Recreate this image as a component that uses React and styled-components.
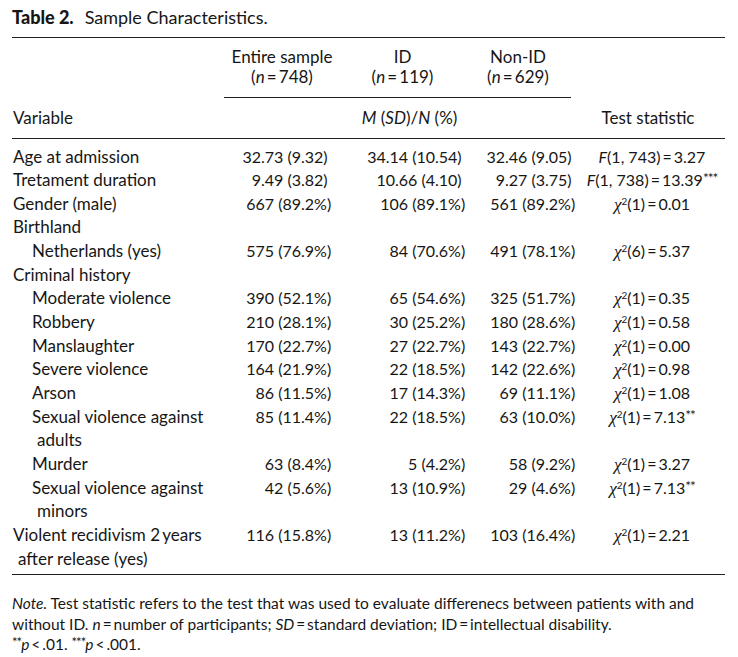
import styled, { createGlobalStyle } from 'styled-components';

const GlobalStyle = createGlobalStyle`
  body {
    margin: 0;
    background: #fff;
    color: #161616;
    font-family: Lato, "Open Sans", sans-serif;
  }
`;

const Page = styled.div`
  width: 713px;
  padding: 7px 0 0 12px;
`;

const Title = styled.div`
  font-size: 18px;
  line-height: 20px;
  margin-bottom: 10px;
  b {
    font-weight: 900;
    margin-right: 11px;
  }
`;

const Table = styled.table`
  width: 713px;
  border-collapse: collapse;
  table-layout: fixed;
  font-size: 17px;
  border-top: 1.5px solid #222;
  border-bottom: 1.5px solid #222;
`;

const Th = styled.th`
  font-weight: 400;
  text-align: ${(p) => p.$align || 'center'};
  padding: ${(p) => p.$pad || '0'};
  line-height: 19.5px;
  vertical-align: middle;
  white-space: nowrap;
  border-bottom: ${(p) => (p.$rule ? '1.5px solid #222' : 'none')};
`;

const Td = styled.td`
  padding: 0 0 0 ${(p) => p.$shift || 0}px;
  font-size: 16px;
  line-height: 23.65px;
  vertical-align: top;
  text-align: ${(p) => p.$align || 'left'};
  white-space: nowrap;
`;

const Label = styled.td`
  line-height: 23.65px;
  vertical-align: top;
  padding: 0 0 0 ${(p) => (p.$level ? 25 : 6)}px;
  text-indent: -5px;
`;

const Body = styled.tbody`
  tr:first-child td {
    padding-top: 6px;
  }
  tr:last-child td {
    padding-bottom: 4px;
  }
`;

const Lead = styled.span`
  display: inline-block;
  width: ${(p) => p.$w}px;
  text-align: right;
  white-space: pre;
`;

const Chi = styled.span`
  font-family: "Liberation Serif", serif;
  font-style: italic;
  font-size: 1.08em;
  line-height: 0;
`;

const Sup = styled.sup`
  font-size: 0.62em;
  line-height: 0;
  vertical-align: 0.55em;
`;

const Stars = styled.span`
  font-size: 0.85em;
  vertical-align: 0.2em;
  line-height: 0;
  letter-spacing: -1px;
`;

const Note = styled.div`
  font-size: 15.5px;
  line-height: 20.5px;
  padding-top: 18px;
  white-space: nowrap;
`;

const COLS = [212, 116, 125, 106, 154];
const LEADS = [77, 95, 80];

const Dec = ({ v, w }) => {
  const i = v.lastIndexOf('.');
  return (
    <>
      <Lead $w={w}>{v.slice(0, i)}</Lead>
      {v.slice(i)}
    </>
  );
};

const Stat = ({ f, df, val, stars }) => (
  <>
    {f ? <i>F</i> : <><Chi>χ</Chi><Sup>2</Sup></>}({df})&thinsp;=&thinsp;{val}
    {stars && <Stars>{stars}</Stars>}
  </>
);

const rows = [
  { label: 'Age at admission', d: ['32.73 (9.32)', '34.14 (10.54)', '32.46 (9.05)'], s: { f: true, df: '1, 743', val: '3.27' } },
  { label: 'Tretament duration', d: ['9.49 (3.82)', '10.66 (4.10)', '9.27 (3.75)'], s: { f: true, df: '1, 738', val: '13.39', stars: '***' } },
  { label: 'Gender (male)', d: ['667 (89.2%)', '106 (89.1%)', '561 (89.2%)'], s: { df: '1', val: '0.01' } },
  { label: 'Birthland' },
  { label: 'Netherlands (yes)', level: 1, d: ['575 (76.9%)', '84 (70.6%)', '491 (78.1%)'], s: { df: '6', val: '5.37' } },
  { label: 'Criminal history' },
  { label: 'Moderate violence', level: 1, d: ['390 (52.1%)', '65 (54.6%)', '325 (51.7%)'], s: { df: '1', val: '0.35' } },
  { label: 'Robbery', level: 1, d: ['210 (28.1%)', '30 (25.2%)', '180 (28.6%)'], s: { df: '1', val: '0.58' } },
  { label: 'Manslaughter', level: 1, d: ['170 (22.7%)', '27 (22.7%)', '143 (22.7%)'], s: { df: '1', val: '0.00' } },
  { label: 'Severe violence', level: 1, d: ['164 (21.9%)', '22 (18.5%)', '142 (22.6%)'], s: { df: '1', val: '0.98' } },
  { label: 'Arson', level: 1, d: ['86 (11.5%)', '17 (14.3%)', '69 (11.1%)'], s: { df: '1', val: '1.08' } },
  { label: 'Sexual violence against adults', level: 1, d: ['85 (11.4%)', '22 (18.5%)', '63 (10.0%)'], s: { df: '1', val: '7.13', stars: '**' } },
  { label: 'Murder', level: 1, d: ['63 (8.4%)', '5 (4.2%)', '58 (9.2%)'], s: { df: '1', val: '3.27' } },
  { label: 'Sexual violence against minors', level: 1, d: ['42 (5.6%)', '13 (10.9%)', '29 (4.6%)'], s: { df: '1', val: '7.13', stars: '**' } },
  { label: 'Violent recidivism 2\u2009years after release (yes)', d: ['116 (15.8%)', '13 (11.2%)', '103 (16.4%)'], s: { df: '1', val: '2.21' } },
];

const App = () => (
  <Page>
    <GlobalStyle />
    <Title>
      <b>Table 2.</b>Sample Characteristics.
    </Title>
    <Table>
      <colgroup>
        {COLS.map((w, i) => (
          <col key={i} style={{ width: w }} />
        ))}
      </colgroup>
      <thead>
        <tr>
          <Th />
          <Th $rule $pad="9px 0 11px">
            Entire sample
            <br />(<i>n</i>&thinsp;=&thinsp;748)
          </Th>
          <Th $rule $pad="9px 0 11px">
            ID
            <br />(<i>n</i>&thinsp;=&thinsp;119)
          </Th>
          <Th $rule $pad="9px 0 11px">
            Non-ID
            <br />(<i>n</i>&thinsp;=&thinsp;629)
          </Th>
          <Th />
        </tr>
        <tr style={{ borderBottom: '1.5px solid #222' }}>
          <Th $align="left" $pad="10px 0 10px 1px">Variable</Th>
          <Th colSpan={3} $pad="10px 0 10px 24px">
            <i>M</i> (<i>SD</i>)/<i>N</i> (%)
          </Th>
          <Th $pad="10px 0 10px 0">Test statistic</Th>
        </tr>
      </thead>
      <Body>
        {rows.map((r, i) => (
          <tr key={i}>
            <Label $level={r.level}>{r.label}</Label>
            {r.d ? (
              <>
                {r.d.map((v, j) => (
                  <Td key={j}>
                    <Dec v={v} w={LEADS[j]} />
                  </Td>
                ))}
                <Td $align="center" $shift={8}>
                  <Stat {...r.s} />
                </Td>
              </>
            ) : (
              <Td colSpan={4} />
            )}
          </tr>
        ))}
      </Body>
    </Table>
    <Note>
      <i>Note.</i> Test statistic refers to the test that was used to evaluate differenecs between patients with and
      <br />
      without ID. <i>n</i>&thinsp;=&thinsp;number of participants; <i>SD</i>&thinsp;=&thinsp;standard deviation; ID&thinsp;=&thinsp;intellectual disability.
      <br />
      <Stars>**</Stars>
      <i>p</i>&thinsp;&lt;&thinsp;.01. <Stars>***</Stars>
      <i>p</i>&thinsp;&lt;&thinsp;.001.
    </Note>
  </Page>
);

export default App;
